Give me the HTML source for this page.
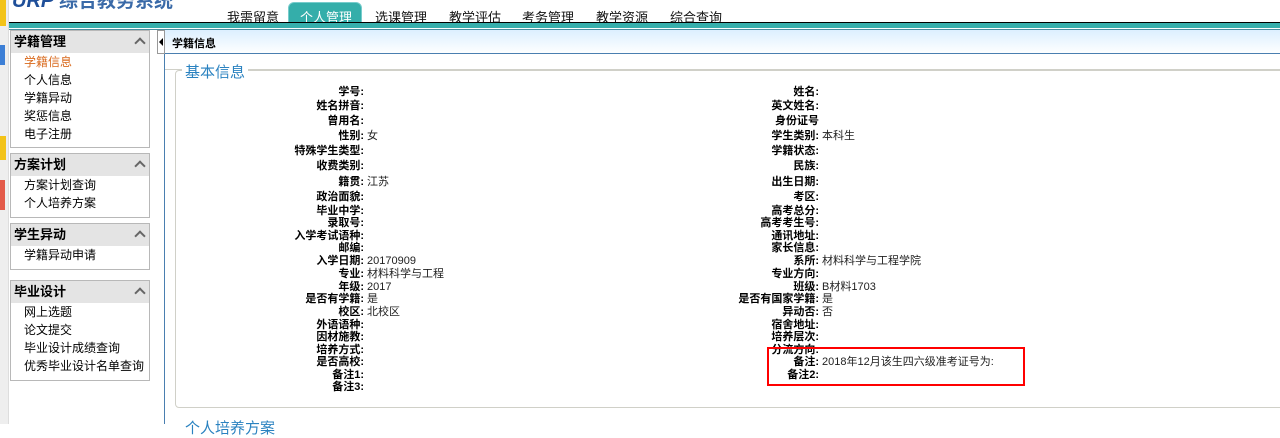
<!DOCTYPE html>
<html><head><meta charset="utf-8"><style>
*{margin:0;padding:0;box-sizing:border-box}
body{width:1280px;height:424px;overflow:hidden;background:#fff;font-family:"Liberation Sans","Noto Sans CJK SC",sans-serif;position:relative;font-size:11px;color:#000}
.a{position:absolute;white-space:nowrap}
.tab{position:absolute;top:7px;font-size:13px;text-decoration:underline;color:#111}
.box{position:absolute;left:10px;width:140px;border:1px solid #b8b8b8;background:#fff;overflow:hidden}
.box .h{height:22px;background:#e4e4e4;font-weight:bold;font-size:13px;line-height:22px;padding-left:3px;position:relative}
.box .h:after{content:"";position:absolute;right:5px;top:8px;width:6px;height:6px;border-left:2px solid #666;border-top:2px solid #666;transform:rotate(45deg)}
.box div.i{font-size:12px;line-height:18px;padding-left:13px;white-space:nowrap}
.l{position:absolute;font-weight:bold;text-align:right;font-size:11px;line-height:12px}
.v{position:absolute;font-size:11px;line-height:12px;color:#222}
</style></head><body>
<div class="a" style="left:0;top:0;width:9px;height:424px;background:#eeeeee;border-right:1px solid #ddd"></div>
<div class="a" style="left:0;top:0;width:6px;height:26px;background:#f3c318"></div>
<div class="a" style="left:0;top:45px;width:5px;height:20px;background:#3d7fd6"></div>
<div class="a" style="left:0;top:136px;width:6px;height:24px;background:#f3c318"></div>
<div class="a" style="left:0;top:180px;width:5px;height:30px;background:#e35a4a"></div>
<div class="a" style="left:12px;top:-14px;font-size:20px;font-weight:bold;font-style:italic;color:#1f4f99">URP <span style="font-style:normal;font-size:19px;color:#3a6aa8">综合教务系统</span></div>
<div class="tab" style="left:227px">我需留意</div>
<div class="a" style="left:288px;top:2px;width:74px;height:21px;background:#34aeaa;border-radius:6px 6px 0 0;border:1px solid #7cc"></div>
<div class="tab" style="left:300px;color:#fff;text-decoration:none">个人管理</div>
<div class="tab" style="left:375px">选课管理</div>
<div class="tab" style="left:449px">教学评估</div>
<div class="tab" style="left:522px">考务管理</div>
<div class="tab" style="left:596px">教学资源</div>
<div class="tab" style="left:670px">综合查询</div>
<div class="a" style="left:9px;top:22px;width:1271px;height:1px;background:#000"></div>
<div class="a" style="left:9px;top:23px;width:1271px;height:5px;background:#36afac"></div>
<div class="a" style="left:9px;top:29px;width:1271px;height:1px;background:#4a8fa0"></div>

<div class="box" style="top:30px;height:118px"><div class="h">学籍管理</div><div class="i" style="color:#d9691c">学籍信息</div><div class="i">个人信息</div><div class="i">学籍异动</div><div class="i">奖惩信息</div><div class="i">电子注册</div></div>
<div class="box" style="top:153px;height:65px"><div class="h">方案计划</div><div class="i">方案计划查询</div><div class="i">个人培养方案</div></div>
<div class="box" style="top:223px;height:47px"><div class="h">学生异动</div><div class="i">学籍异动申请</div></div>
<div class="box" style="top:280px;height:101px"><div class="h">毕业设计</div><div class="i">网上选题</div><div class="i">论文提交</div><div class="i">毕业设计成绩查询</div><div class="i">优秀毕业设计名单查询</div></div>

<div class="a" style="left:157px;top:30px;width:8px;height:24px;border:1px solid #999;background:#fff"></div>
<div class="a" style="left:159px;top:38px;border-right:4px solid #000;border-top:4px solid transparent;border-bottom:4px solid transparent"></div>
<div class="a" style="left:164px;top:54px;width:1px;height:370px;background:#4a7fb0"></div>
<div class="a" style="left:165px;top:30px;width:1115px;height:24px;background:linear-gradient(#dcefff,#fff)"></div>
<div class="a" style="left:165px;top:53px;width:1115px;height:1px;background:#4a7fb0"></div>
<div class="a" style="left:172px;top:35px;font-weight:bold;font-size:11px">学籍信息</div>
<div class="a" style="left:165px;top:69px;width:1115px;height:1px;background:#d0d0c8"></div>
<div class="a" style="left:175px;top:70px;width:1110px;height:338px;border:1px solid #d0d0c8;border-radius:4px"></div>
<div class="a" style="left:182px;top:61px;font-size:15px;color:#2a82c0;background:#fff;padding:0 3px">基本信息</div>
<div class="a" style="left:185px;top:417px;font-size:15px;color:#2a82c0">个人培养方案</div>

<div class="a" style="left:767px;top:347px;width:258px;height:39px;border:2px solid #f00;z-index:2"></div>

<div id="rows"></div>
<script>
var tops=[91,105,120,135,150,165,181,196,210,222,235,247,260,273,286,298,311,324,336,349,361,374,386];
var L=[["学号",""],["姓名拼音",""],["曾用名",""],["性别","女"],["特殊学生类型",""],["收费类别",""],["籍贯","江苏"],["政治面貌",""],["毕业中学",""],["录取号",""],["入学考试语种",""],["邮编",""],["入学日期","20170909"],["专业","材料科学与工程"],["年级","2017"],["是否有学籍","是"],["校区","北校区"],["外语语种",""],["因材施教",""],["培养方式",""],["是否高校",""],["备注1",""],["备注3",""]];
var R=[["姓名",""],["英文姓名",""],["身份证号",""],["学生类别","本科生"],["学籍状态",""],["民族",""],["出生日期",""],["考区",""],["高考总分",""],["高考考生号",""],["通讯地址",""],["家长信息",""],["系所","材料科学与工程学院"],["专业方向",""],["班级","B材料1703"],["是否有国家学籍","是"],["异动否","否"],["宿舍地址",""],["培养层次",""],["分流方向",""],["备注","2018年12月该生四六级准考证号为:"],["备注2",""]];
var h="";
function add(arr,x){arr.forEach(function(r,i){var t=tops[i]-5;var lb=r[0]+(r[0]=="身份证号"?"":":");h+='<div class="l" style="right:'+(1280-x)+'px;top:'+t+'px">'+lb+'</div>';if(r[1])h+='<div class="v" style="left:'+(x+3)+'px;top:'+t+'px">'+r[1]+'</div>';});}
add(L,364);add(R,819);
document.getElementById("rows").innerHTML=h;
</script>
</body></html>
